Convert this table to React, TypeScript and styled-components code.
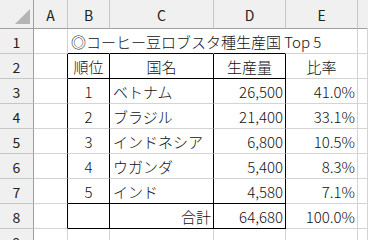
import React from 'react';
import styled, { createGlobalStyle } from 'styled-components';

const GlobalStyle = createGlobalStyle`
  html, body {
    margin: 0;
    padding: 0;
    background: #ffffff;
  }
  body {
    font-family: "Noto Sans CJK JP", "Noto Sans", sans-serif;
  }
`;

const GRID = '#d4d4d4';
const HEAD_LINE = '#c6c6c6';
const HEAD_EDGE = '#9f9f9f';
const INK = '#000000';

const Sheet = styled.div`
  display: grid;
  grid-template-columns: 34px 34px 42px 104px 72px 72px 1fr;
  grid-template-rows: 29px repeat(9, 25px);
  width: 368px;
  height: 240px;
  overflow: hidden;
  background: #ffffff;
`;

const Corner = styled.div`
  position: relative;
  box-sizing: border-box;
  background: #f0f0f0;
  border-right: 1px solid ${HEAD_EDGE};
  border-bottom: 1px solid ${HEAD_EDGE};
`;

const CornerMark = styled.svg`
  position: absolute;
  left: 15px;
  top: 9px;
`;

const ColHead = styled.div<{ $last?: boolean }>`
  box-sizing: border-box;
  display: flex;
  align-items: center;
  justify-content: center;
  background: #f0f0f0;
  border-right: 1px solid ${p => (p.$last ? 'transparent' : HEAD_LINE)};
  border-bottom: 1px solid ${HEAD_EDGE};
  color: #222222;
  font-size: 14px;
  padding-top: 1px;
`;

const RowHead = styled.div`
  box-sizing: border-box;
  display: flex;
  align-items: center;
  justify-content: center;
  background: #f0f0f0;
  border-right: 1px solid ${HEAD_EDGE};
  border-bottom: 1px solid ${HEAD_LINE};
  color: #222222;
  font-size: 14px;
  padding-top: 1px;
`;

const Cell = styled.div<{ $r?: string; $b?: string; $align?: 'left' | 'center' | 'right' }>`
  box-sizing: border-box;
  display: flex;
  align-items: center;
  justify-content: ${p => (p.$align === 'right' ? 'flex-end' : p.$align === 'center' ? 'center' : 'flex-start')};
  padding: 1px ${p => (p.$align === 'right' ? '2px' : '3px')} 0 3px;
  border-right: 1px solid ${p => p.$r || GRID};
  border-bottom: 1px solid ${p => p.$b || GRID};
  color: #111111;
  font-size: 15px;
  font-weight: 300;
  white-space: nowrap;
  overflow: visible;
  position: relative;
`;

const Title = styled.span`
  position: relative;
  z-index: 1;
`;

type Row = { rank: string; name: string; amount: string; ratio: string };

const rows: Row[] = [
  { rank: '1', name: 'ベトナム', amount: '26,500', ratio: '41.0%' },
  { rank: '2', name: 'ブラジル', amount: '21,400', ratio: '33.1%' },
  { rank: '3', name: 'インドネシア', amount: '6,800', ratio: '10.5%' },
  { rank: '4', name: 'ウガンダ', amount: '5,400', ratio: '8.3%' },
  { rank: '5', name: 'インド', amount: '4,580', ratio: '7.1%' },
];

const App: React.FC = () => {
  return (
    <>
      <GlobalStyle />
      <Sheet>
        <Corner>
          <CornerMark width="15" height="15" viewBox="0 0 15 15">
            <polygon points="15,0 15,15 0,15" fill="#b4b4b4" />
          </CornerMark>
        </Corner>
        {['A', 'B', 'C', 'D', 'E'].map(l => (
          <ColHead key={l}>{l}</ColHead>
        ))}
        <ColHead $last />

        {/* row 1: title overflowing B..E */}
        <RowHead>1</RowHead>
        <Cell />
        <Cell $r="#ffffff" $b={INK}>
          <Title>◎コーヒー豆ロブスタ種生産国 Top 5</Title>
        </Cell>
        <Cell $r="#ffffff" $b={INK} />
        <Cell $r="#ffffff" $b={INK} />
        <Cell />
        <Cell />

        {/* row 2: headers */}
        <RowHead>2</RowHead>
        <Cell $r={INK} />
        <Cell $r={INK} $b={INK} $align="center">順位</Cell>
        <Cell $r={INK} $b={INK} $align="center">国名</Cell>
        <Cell $r={INK} $b={INK} $align="center">生産量</Cell>
        <Cell $align="center">比率</Cell>
        <Cell />

        {rows.map((r, i) => (
          <React.Fragment key={r.rank}>
            <RowHead>{i + 3}</RowHead>
            <Cell $r={INK} />
            <Cell $r={INK} $b={i === rows.length - 1 ? INK : undefined} $align="center">{r.rank}</Cell>
            <Cell $r={INK} $b={i === rows.length - 1 ? INK : undefined}>{r.name}</Cell>
            <Cell $r={INK} $b={i === rows.length - 1 ? INK : undefined} $align="right">{r.amount}</Cell>
            <Cell $align="right">{r.ratio}</Cell>
            <Cell />
          </React.Fragment>
        ))}

        {/* row 8: total */}
        <RowHead>8</RowHead>
        <Cell $r={INK} />
        <Cell $r={INK} $b={INK} />
        <Cell $r={INK} $b={INK} $align="right">合計</Cell>
        <Cell $r={INK} $b={INK} $align="right">64,680</Cell>
        <Cell $align="right">100.0%</Cell>
        <Cell />

        <RowHead>9</RowHead>
        <Cell />
        <Cell />
        <Cell />
        <Cell />
        <Cell />
        <Cell />
      </Sheet>
    </>
  );
};

export default App;
